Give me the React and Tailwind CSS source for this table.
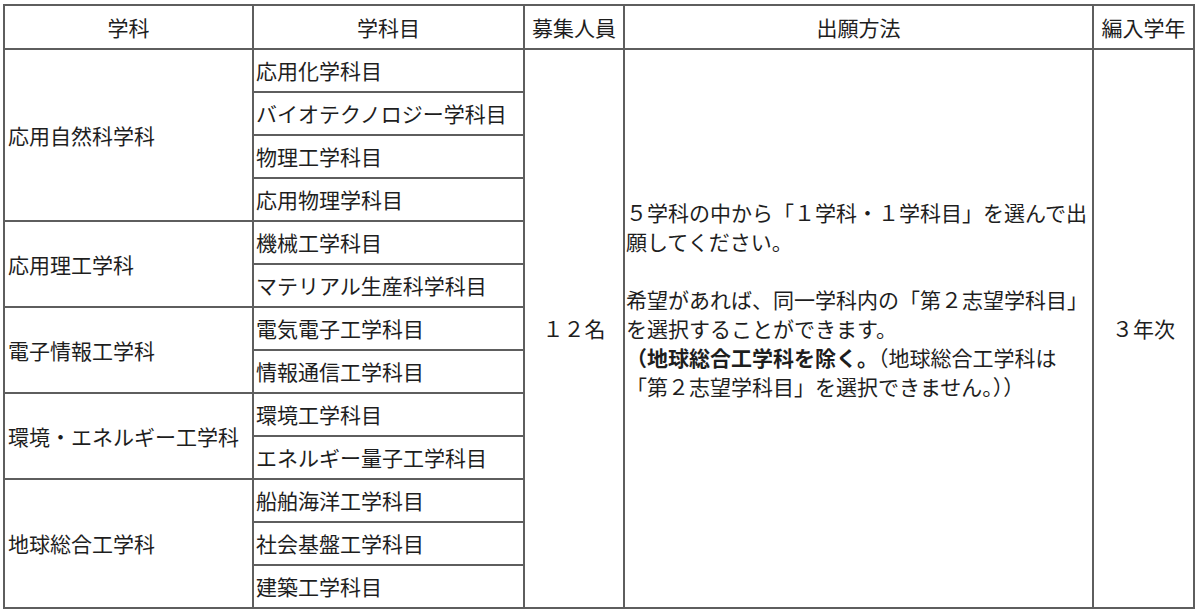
const cell = 'border-r-2 border-b-2 border-[#5e5e5e] flex items-center';

const departments = [
  { name: '応用自然科学科', subjects: ['応用化学科目', 'バイオテクノロジー学科目', '物理工学科目', '応用物理学科目'] },
  { name: '応用理工学科', subjects: ['機械工学科目', 'マテリアル生産科学科目'] },
  { name: '電子情報工学科', subjects: ['電気電子工学科目', '情報通信工学科目'] },
  { name: '環境・エネルギー工学科', subjects: ['環境工学科目', 'エネルギー量子工学科目'] },
  { name: '地球総合工学科', subjects: ['船舶海洋工学科目', '社会基盤工学科目', '建築工学科目'] },
];

const spanClass = { 2: 'row-span-2', 3: 'row-span-3', 4: 'row-span-4' };

export default function App() {
  return (
    <div className="w-[1200px] h-[616px] overflow-hidden bg-white pt-[4px] pl-[3px] text-[21px] leading-[29px] text-[#1e1e1e] font-['Noto_Sans_CJK_JP','Noto_Sans_CJK_SC',sans-serif]">
      <div className="grid w-fit grid-cols-[249px_271px_100px_469px_101px] grid-rows-[44px_repeat(13,43px)] border-l-2 border-t-2 border-[#5e5e5e]">
        <div className={`${cell} justify-center`}>学科</div>
        <div className={`${cell} justify-center`}>学科目</div>
        <div className={`${cell} justify-center`}>募集人員</div>
        <div className={`${cell} justify-center`}>出願方法</div>
        <div className={`${cell} justify-center`}>編入学年</div>

        {departments.map((d, i) => (
          <DeptRows key={d.name} dept={d} first={i === 0} />
        ))}
      </div>
    </div>
  );
}

function DeptRows({ dept, first }) {
  const [head, ...rest] = dept.subjects;
  return (
    <>
      <div className={`${cell} ${spanClass[dept.subjects.length]} col-start-1 pl-[3px] whitespace-nowrap`}>{dept.name}</div>
      <div className={`${cell} col-start-2 pl-[2px] whitespace-nowrap`}>{head}</div>
      {first && (
        <>
          <div className={`${cell} row-span-13 col-start-3 justify-center`}>１２名</div>
          <div className={`${cell} row-span-13 col-start-4 flex-col !items-start justify-center pl-[1px] whitespace-nowrap`}>
            <p>５学科の中から「１学科・１学科目」を選んで出</p>
            <p>願してください。</p>
            <p>&nbsp;</p>
            <p>希望があれば、同一学科内の「第２志望学科目」</p>
            <p>を選択することができます。</p>
            <p>
              <span className="font-bold">（地球総合工学科を除く。</span>（地球総合工学科は
            </p>
            <p>「第２志望学科目」を選択できません。））</p>
            <p>&nbsp;</p>
            <p>&nbsp;</p>
          </div>
          <div className={`${cell} row-span-13 col-start-5 justify-center`}>３年次</div>
        </>
      )}
      {rest.map((s) => (
        <div key={s} className={`${cell} col-start-2 pl-[2px] whitespace-nowrap`}>{s}</div>
      ))}
    </>
  );
}
